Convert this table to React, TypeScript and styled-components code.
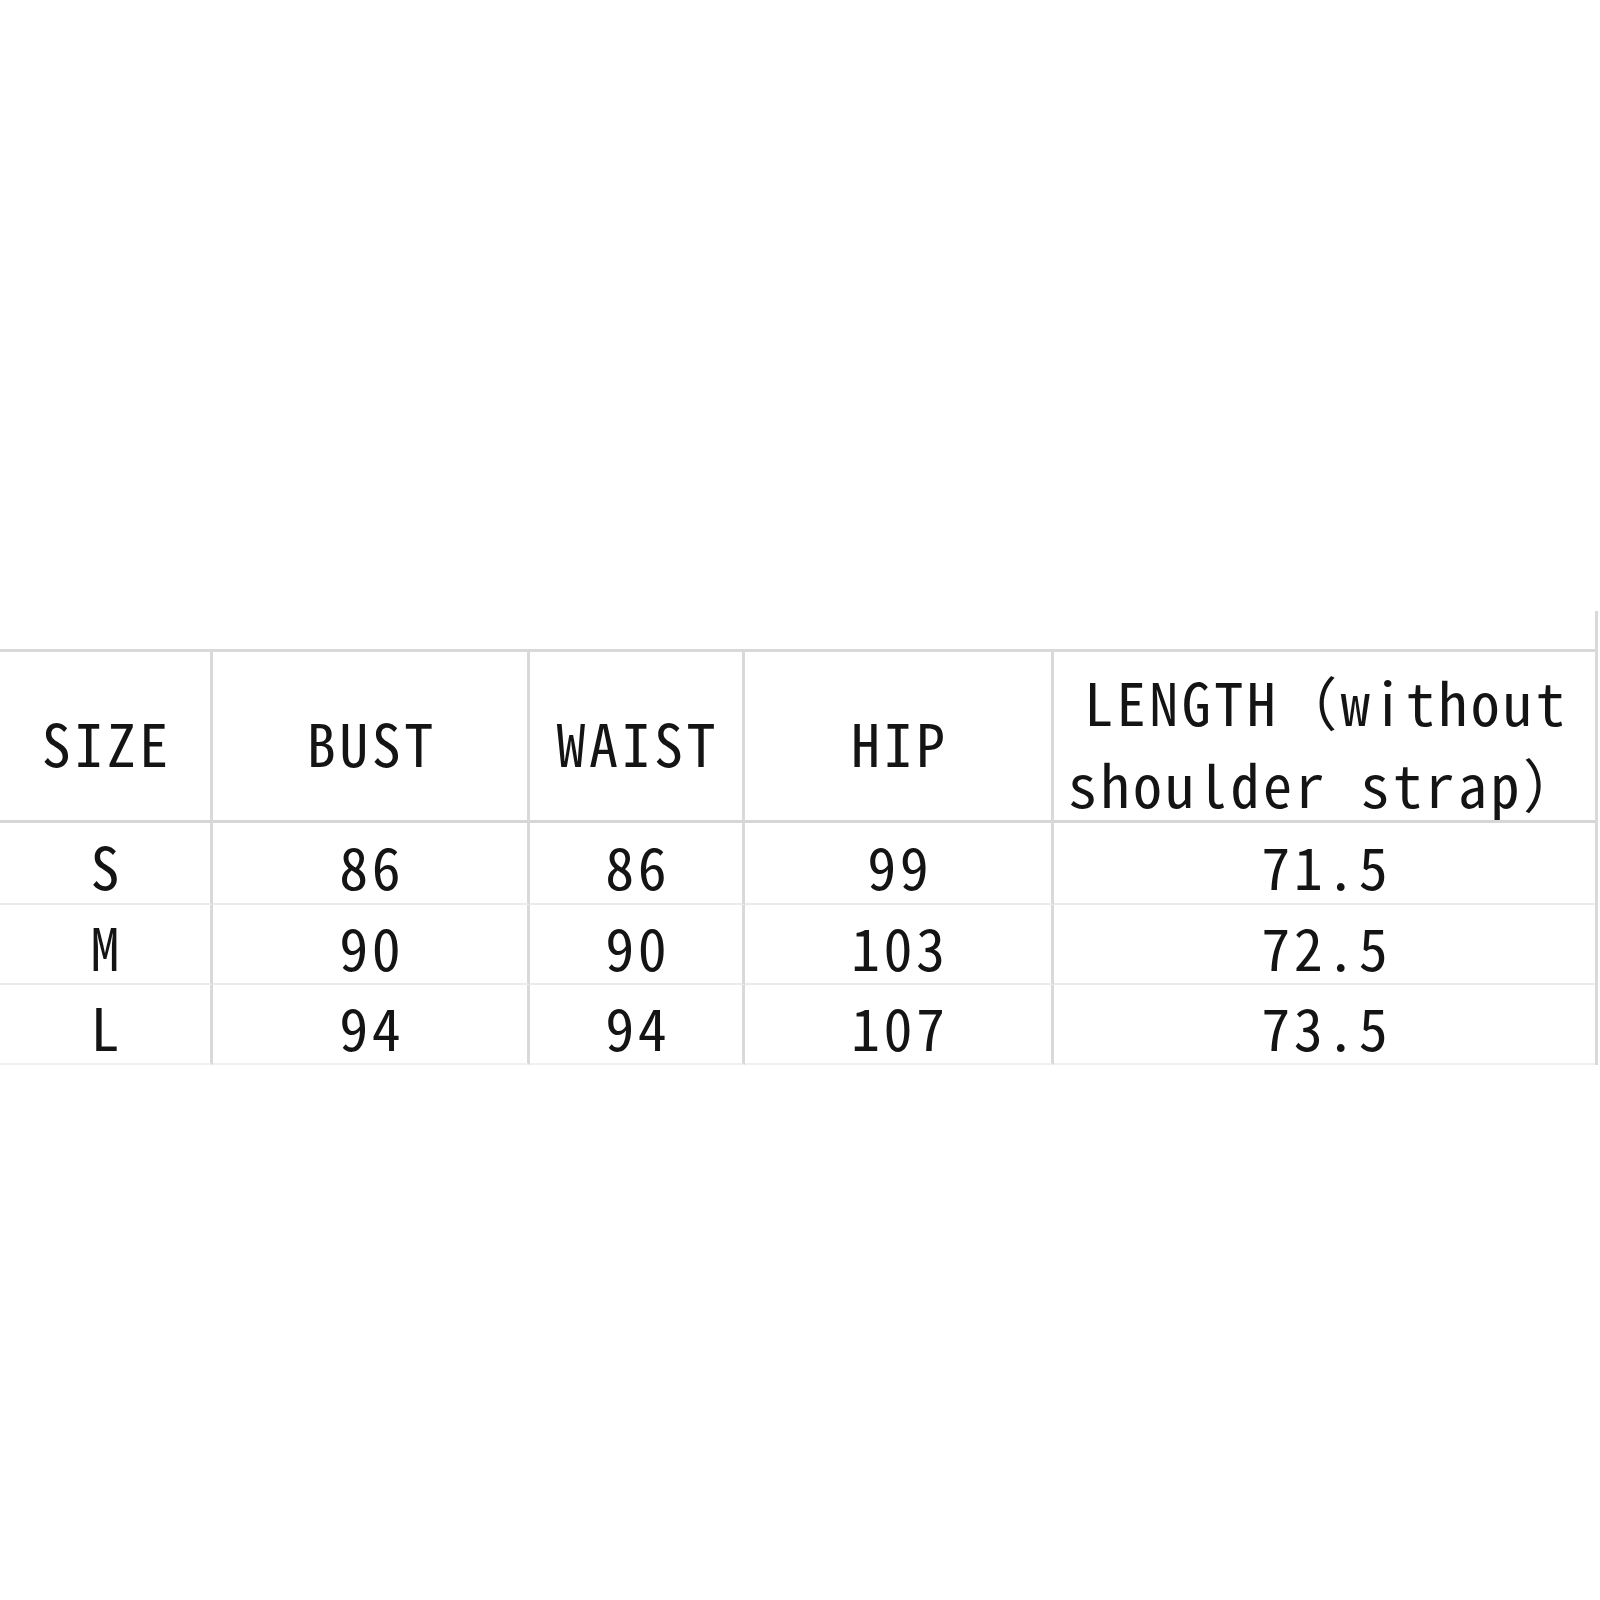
import React from 'react';
import styled, { createGlobalStyle } from 'styled-components';

const GlobalStyle = createGlobalStyle`
  html, body {
    margin: 0;
    padding: 0;
    background: #ffffff;
  }
`;

type SizeRow = {
  size: string;
  bust: string;
  waist: string;
  hip: string;
  length: string;
};

const rows: SizeRow[] = [
  { size: 'S', bust: '86', waist: '86', hip: '99', length: '71.5' },
  { size: 'M', bust: '90', waist: '90', hip: '103', length: '72.5' },
  { size: 'L', bust: '94', waist: '94', hip: '107', length: '73.5' },
];

const App = () => {
  return (
    <Page>
      <GlobalStyle />
      <Frame>
        <Stub />
        <Table>
          <Cell $head>
            <Label>SIZE</Label>
          </Cell>
          <Cell $head>
            <Label>BUST</Label>
          </Cell>
          <Cell $head>
            <Label>WAIST</Label>
          </Cell>
          <Cell $head>
            <Label>HIP</Label>
          </Cell>
          <Cell $head $lastCol>
            <Label $wrap>
              LENGTH（without
              <br />
              shoulder strap）
            </Label>
          </Cell>
          {rows.map((row, i) => {
            const last = i === rows.length - 1;
            return (
              <React.Fragment key={row.size}>
                <Cell $lastRow={last}>
                  <Label>{row.size}</Label>
                </Cell>
                <Cell $lastRow={last}>
                  <Label>{row.bust}</Label>
                </Cell>
                <Cell $lastRow={last}>
                  <Label>{row.waist}</Label>
                </Cell>
                <Cell $lastRow={last}>
                  <Label>{row.hip}</Label>
                </Cell>
                <Cell $lastRow={last} $lastCol>
                  <Label>{row.length}</Label>
                </Cell>
              </React.Fragment>
            );
          })}
        </Table>
      </Frame>
    </Page>
  );
};

export default App;

const Page = styled.div`
  width: 1600px;
  height: 1600px;
  padding-top: 611px;
  box-sizing: border-box;
  background: #ffffff;
`;

const Frame = styled.div`
  width: 1598px;
  border-right: 3px solid #d9d9d9;
  box-sizing: border-box;
`;

const Stub = styled.div`
  height: 38px;
`;

const Table = styled.div`
  display: grid;
  grid-template-columns: 213px 317px 215px 309px 1fr;
  grid-template-rows: 171px 82px 80px 80px;
  border-top: 3px solid #d9d9d9;
`;

const Cell = styled.div<{ $head?: boolean; $lastRow?: boolean; $lastCol?: boolean }>`
  display: flex;
  align-items: center;
  justify-content: center;
  box-sizing: border-box;
  border-right: ${(p) => (p.$lastCol ? 'none' : '3px solid #d9d9d9')};
  border-bottom: ${(p) =>
    p.$head ? '3px solid #d6d6d6' : p.$lastRow ? '2px solid #f0f0f0' : '2px solid #ebebeb'};
  padding-top: ${(p) => (p.$head ? '12px' : '4px')};
  color: #141414;
`;

const Label = styled.span<{ $wrap?: boolean }>`
  display: inline-block;
  font-family: 'Noto Sans Mono CJK SC', 'DejaVu Sans Mono', 'Noto Sans CJK SC', monospace;
  font-size: 58px;
  letter-spacing: 3.5px;
  padding-left: 3.5px;
  line-height: ${(p) => (p.$wrap ? '82px' : '1')};
  text-align: center;
  white-space: nowrap;
`;
